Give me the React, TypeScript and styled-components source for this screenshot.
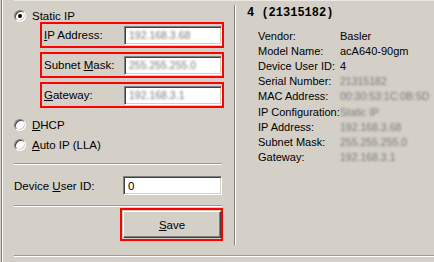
import React from 'react'
import styled, { createGlobalStyle } from 'styled-components'

const GlobalStyle = createGlobalStyle`
  html, body {
    margin: 0;
    padding: 0;
    background: #d4d0c8;
  }
  body {
    font-family: 'Liberation Sans', Arial, sans-serif;
    font-size: 11.5px;
    color: #000;
  }
`

const Frame = styled.div`
  position: relative;
  display: flex;
  flex-direction: column;
  width: 432px;
  height: 262px;
  margin-left: 1px;
  border-left: 1px solid #808080;
  box-shadow: inset 1px 0 0 #fff;
  overflow: hidden;
`

const TopRule = styled.div`
  height: 1px;
  margin-left: 12px;
  background: #ebe9e4;
`

const Main = styled.div`
  display: flex;
  height: 254px;
`

const Rule = styled.div<{ $width?: number; $left?: number; $top?: number }>`
  width: ${(p) => (p.$width ? `${p.$width}px` : 'auto')};
  margin-left: ${(p) => p.$left ?? 0}px;
  margin-top: ${(p) => p.$top ?? 0}px;
  border-top: 1px solid #9d9a94;
  border-bottom: 1px solid #fff;
  height: 0;
`

const LeftPanel = styled.div`
  display: flex;
  flex-direction: column;
  width: 232px;
  padding-left: 12px;
  box-sizing: border-box;
`

const RadioRow = styled.label<{ $top: number }>`
  display: flex;
  align-items: center;
  gap: 6px;
  height: 12px;
  margin-top: ${(p) => p.$top}px;
  line-height: 12px;
  white-space: nowrap;
`

const RadioDot = styled.span<{ $checked?: boolean }>`
  position: relative;
  display: block;
  width: 12px;
  height: 12px;
  box-sizing: border-box;
  border-radius: 50%;
  background: #fff;
  border: 1px solid;
  border-color: #808080 #fff #fff #808080;
  box-shadow: inset 1px 1px 0 #404040, inset -1px -1px 0 #d4d0c8;

  &::after {
    content: '';
    display: ${(p) => (p.$checked ? 'block' : 'none')};
    position: absolute;
    left: 3px;
    top: 3px;
    width: 4px;
    height: 4px;
    border-radius: 50%;
    background: #000;
  }
`

const BoxGroup = styled.div`
  display: flex;
  flex-direction: column;
  gap: 4px;
  width: 184px;
  margin-left: 26px;
`

const Highlight = styled.div`
  display: flex;
  align-items: center;
  justify-content: space-between;
  height: 26px;
  box-sizing: border-box;
  border: 2px solid #f00;
  padding: 0 0 0 2px;
`

const FieldLabel = styled.span`
  white-space: nowrap;
`

const Field = styled.div<{ $width: number }>`
  display: flex;
  align-items: center;
  width: ${(p) => p.$width}px;
  height: 19px;
  box-sizing: border-box;
  padding-left: 4px;
  background: #fff;
  border: 1px solid;
  border-color: #808080 #fff #fff #808080;
  box-shadow: inset 1px 1px 0 #404040, inset -1px -1px 0 #d4d0c8;
`

const Blurred = styled.span`
  color: #7a7a7a;
  filter: blur(1.2px);
  white-space: nowrap;
  font-size: 10.5px;
`

const DeviceRow = styled.div`
  display: flex;
  align-items: center;
  justify-content: space-between;
  width: 208px;
  margin-top: 11px;
`

const SaveBox = styled.div`
  width: 103px;
  height: 33px;
  box-sizing: border-box;
  margin: 1px 0 0 106px;
  border: 2px solid #f00;
  padding: 1px 0 1px 1px;
`

const SaveButton = styled.button`
  display: block;
  width: 98px;
  height: 27px;
  padding: 0;
  font: inherit;
  color: #000;
  background: #d4d0c8;
  border: 1px solid;
  border-color: #fff #404040 #404040 #fff;
  box-shadow: inset -1px -1px 0 #808080;
`

const RightPanel = styled.div`
  display: flex;
  flex-direction: column;
  flex: 1;
  height: 240px;
  margin-top: 4px;
  padding-left: 12px;
  border-left: 1px solid #808080;
  box-shadow: inset 1px 0 0 #fff;
  font-size: 11px;
`

const Title = styled.div`
  margin-top: 1px;
  height: 14px;
  line-height: 14px;
  font-family: 'Liberation Mono', 'DejaVu Sans Mono', monospace;
  font-weight: bold;
  font-size: 12px;
`

const InfoGrid = styled.div`
  display: grid;
  grid-template-columns: 82px auto;
  grid-auto-rows: 15.2px;
  align-items: center;
  margin: 8px 0 0 11px;
  line-height: 14px;
  white-space: nowrap;
`

const info: [string, string, boolean][] = [
  ['Vendor:', 'Basler', false],
  ['Model Name:', 'acA640-90gm', false],
  ['Device User ID:', '4', false],
  ['Serial Number:', '21315182', true],
  ['MAC Address:', '00:30:53:1C:0B:5D', true],
  ['IP Configuration:', 'Static IP', true],
  ['IP Address:', '192.168.3.68', true],
  ['Subnet Mask:', '255.255.255.0', true],
  ['Gateway:', '192.168.3.1', true],
]

export default function App() {
  return (
    <>
      <GlobalStyle />
      <Frame>
        <TopRule />
        <Main>
          <LeftPanel>
            <RadioRow $top={9}>
              <RadioDot $checked />
              <span>Static IP</span>
            </RadioRow>
            <BoxGroup>
              <Highlight>
                <FieldLabel>
                  <u>I</u>P Address:
                </FieldLabel>
                <Field $width={98}>
                  <Blurred>192.168.3.68</Blurred>
                </Field>
              </Highlight>
              <Highlight>
                <FieldLabel>
                  Subnet <u>M</u>ask:
                </FieldLabel>
                <Field $width={98}>
                  <Blurred>255.255.255.0</Blurred>
                </Field>
              </Highlight>
              <Highlight>
                <FieldLabel>
                  <u>G</u>ateway:
                </FieldLabel>
                <Field $width={98}>
                  <Blurred>192.168.3.1</Blurred>
                </Field>
              </Highlight>
            </BoxGroup>
            <RadioRow $top={11}>
              <RadioDot />
              <span>
                <u>D</u>HCP
              </span>
            </RadioRow>
            <RadioRow $top={8}>
              <RadioDot />
              <span>
                <u>A</u>uto IP (LLA)
              </span>
            </RadioRow>
            <Rule $width={208} $top={12} />
            <DeviceRow>
              <FieldLabel>
                Device <u>U</u>ser ID:
              </FieldLabel>
              <Field $width={99}>0</Field>
            </DeviceRow>
            <Rule $width={208} $top={10} />
            <SaveBox>
              <SaveButton>
                <u>S</u>ave
              </SaveButton>
            </SaveBox>
          </LeftPanel>
          <RightPanel>
            <Title>4 (21315182)</Title>
            <InfoGrid>
              {info.map(([k, v, blur]) => (
                <React.Fragment key={k}>
                  <span>{k}</span>
                  {blur ? <Blurred>{v}</Blurred> : <span>{v}</span>}
                </React.Fragment>
              ))}
            </InfoGrid>
          </RightPanel>
        </Main>
        <Rule $left={12} />
      </Frame>
    </>
  )
}
